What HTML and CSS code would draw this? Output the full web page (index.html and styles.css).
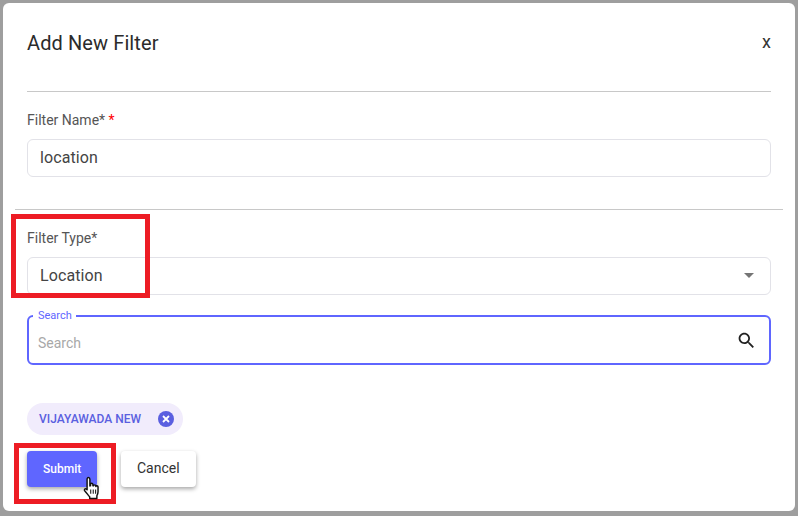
FILE: index.html
```html
<!DOCTYPE html>
<html lang="en">
<head>
    <meta charset="UTF-8">
    <title>Add New Filter</title>
    <link rel="stylesheet" href="styles.css">
</head>
<body>
    <div class="modal">
        <div class="modal-header">
            <h2>Add New Filter</h2>
            <span class="close">x</span>
        </div>
        <hr class="line">

        <label class="field-label" for="filterName">Filter Name* <span class="req">*</span></label>
        <input class="field" type="text" id="filterName" value="location">

        <hr class="line wide">

        <label class="field-label" for="filterType">Filter Type*</label>
        <div class="field select" id="filterType">
            <span>Location</span>
            <svg class="caret" width="10" height="5" viewBox="0 0 10 5"><path d="M0 0h10L5 5z" fill="#757575"/></svg>
        </div>

        <fieldset class="search">
            <legend>Search</legend>
            <input type="text" placeholder="Search">
            <svg class="search-icon" width="21" height="21" viewBox="0 0 24 24"><path fill="#212121" d="M15.5 14h-.79l-.28-.27C15.41 12.59 16 11.11 16 9.5 16 5.91 13.09 3 9.500 3S3 5.910 3 9.500 5.910 16 9.500 16c1.610 0 3.090-.59 4.230-1.570l.27.28v.79l5 4.990L20.490 19l-4.990-5zm-6 0C7.010 14 5 11.990 5 9.500S7.010 5 9.500 5 14 7.010 14 9.500 11.990 14 9.500 14z"/></svg>
        </fieldset>

        <div class="chip">
            <span>VIJAYAWADA NEW</span>
            <svg width="16" height="16" viewBox="0 0 16 16"><circle cx="8" cy="8" r="8" fill="#5a5fe0"/><path d="M5 5l6 6M11 5l-6 6" stroke="#fff" stroke-width="1.800"/></svg>
        </div>

        <div class="actions">
            <button class="btn primary">Submit</button>
            <button class="btn">Cancel</button>
        </div>
    </div>

    <!-- annotations on top of the screenshot -->
    <div class="mark mark-type"></div>
    <div class="mark mark-submit"></div>
    <svg class="pointer" width="19" height="25" viewBox="0 0 18 24">
        <path d="M5 1.500c1 0 1.500.7 1.500 1.700v6.300l.6-.2V8c0-1.300 2.100-1.300 2.300 0v1.300l.6.100c.1-1.200 2.100-1.200 2.200.1v.6c.2-1 2-.9 2.100.3v4.600c0 1.800-.5 2.800-1.100 4v2.500H6.300V20C5 18.700 3.500 16.400 1.500 14.200c-.9-1.100.4-2.400 1.500-1.700l.8.800V3.200c0-1 .5-1.700 1.200-1.700z" fill="#fff" stroke="#111" stroke-width="1.400" stroke-linejoin="round"/>
        <path d="M7.300 13v4M9.700 13v4M12 13v4" stroke="#111" stroke-width="1"/>
    </svg>
</body>
</html>
```

FILE: styles.css
```css
html, body {
    height: 100%;
}
body {
    margin: 0;
    padding: 3px 3px 5px;
    box-sizing: border-box;
    background: #9e9e9e;
    font-family: Roboto, "Liberation Sans", sans-serif;
    position: relative;
    overflow: hidden;
}
.modal {
    background: #fff;
    border-radius: 6px;
    height: 100%;
    padding: 0 24px;
    box-sizing: border-box;
}
.modal-header {
    display: flex;
    justify-content: space-between;
    align-items: center;
    height: 88px;
    padding-bottom: 8px;
    box-sizing: border-box;
}
h2 {
    margin: 0;
    font-size: 20px;
    font-weight: 400;
    color: #2b2b2b;
    letter-spacing: 0.1px;
}
.close {
    font-size: 18px;
    color: #333;
    margin-bottom: 4px;
}
.line {
    border: none;
    border-top: 1px solid #c8c8c8;
    margin: 0;
}
.line.wide {
    margin: 32px -12px 0;
}
.field-label {
    display: block;
    font-size: 14px;
    line-height: 20px;
    color: #555;
    margin: 18px 0 9px;
}
.req {
    color: #f00;
}
.field {
    display: block;
    width: 100%;
    height: 38px;
    padding: 0 12px 1px;
    box-sizing: border-box;
    border: 1px solid #e2e2e8;
    border-radius: 6px;
    font-family: inherit;
    font-size: 16px;
    color: #444;
    letter-spacing: 0.1px;
    background: #fff;
}
.select {
    display: flex;
    justify-content: space-between;
    align-items: center;
    padding-right: 16px;
}
.search {
    display: flex;
    align-items: center;
    height: 55px;
    margin: 15px 0 0;
    padding: 0 12px 0 9px;
    box-sizing: border-box;
    border: 2px solid #5f66ff;
    border-radius: 6px;
}
.search legend {
    font-size: 11px;
    line-height: 12px;
    color: #5f66ff;
    padding: 0 4px 0 5px;
    margin-left: -5px;
}
.search input {
    flex: 1;
    border: none;
    outline: none;
    padding: 0;
    font-family: inherit;
    font-size: 14px;
}
.search input::placeholder {
    color: #a8a8a8;
}
.search-icon {
    margin-bottom: 4px;
}
.chip {
    display: inline-flex;
    align-items: center;
    gap: 17px;
    height: 32px;
    margin-top: 38px;
    padding: 0 9px 0 12px;
    border-radius: 16px;
    background: #f1ecfc;
    font-size: 12px;
    font-weight: 500;
    color: #5a5fe0;
}
.actions {
    display: flex;
    gap: 24px;
    margin-top: 16px;
}
.btn {
    height: 36px;
    padding: 0 16px 2px;
    border: none;
    border-radius: 4px;
    background: #fff;
    color: #333;
    font-family: inherit;
    font-size: 14px;
    box-shadow: 0 2px 4px rgba(0, 0, 0, 0.35);
}
.btn.primary {
    width: 70px;
    padding-bottom: 0;
    background: #5f66ff;
    color: #fff;
    font-size: 12px;
    font-weight: 500;
}
.mark {
    position: absolute;
    box-sizing: border-box;
    border: 5px solid #ed1c24;
}
.mark-type {
    left: 11px;
    top: 214px;
    width: 139px;
    height: 84px;
}
.mark-submit {
    left: 14px;
    top: 443px;
    width: 102px;
    height: 61px;
}
.pointer {
    position: absolute;
    left: 83px;
    top: 476px;
}
```
